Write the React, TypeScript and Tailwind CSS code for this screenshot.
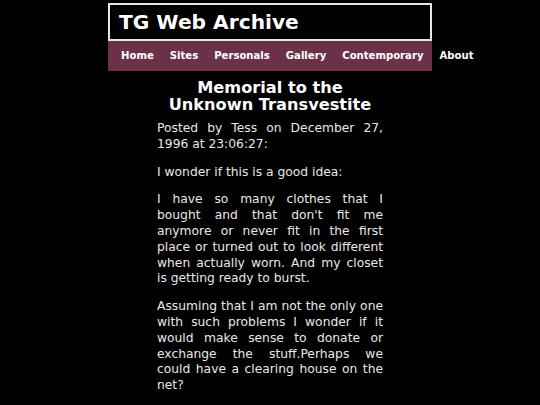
import React from "react";

export default function App() {
  const nav = ["Home", "Sites", "Personals", "Gallery", "Contemporary", "About"];
  return (
    <div className="min-h-[405px] bg-black text-[#e8e8e8]" style={{ fontFamily: '"DejaVu Sans", Verdana, sans-serif' }}>
      <div className="mx-auto w-[324px] pt-[3px]">
        <div className="border-2 border-[#e6e6e6] bg-black h-[38px] flex items-center pl-[9px]">
          <h1 className="text-[20.2px] font-bold text-white leading-none">TG Web Archive</h1>
        </div>
        <nav className="bg-[#6b3149] h-[30px] flex items-center pl-[5px] whitespace-nowrap">
          {nav.map((n) => (
            <a key={n} className="px-[8px] text-[10.1px] font-bold text-white">
              {n}
            </a>
          ))}
        </nav>
      </div>
      <div className="mx-auto w-[226px] pt-[8px]">
        <h2 className="text-center text-[16.2px] font-bold text-white leading-[17px]">
          Memorial to the
          <br />
          Unknown Transvestite
        </h2>
        <div className="text-[12.3px] leading-[15.8px] text-justify mt-[8px]">
          <p className="mb-[12px]">Posted by Tess on December 27, 1996 at 23:06:27:</p>
          <p className="mb-[12px]">I wonder if this is a good idea:</p>
          <p className="mb-[12px]">
            I have so many clothes that I bought and that don't fit me anymore or never fit in the first place or turned out to look different when actually worn. And my closet is getting ready to burst.
          </p>
          <p className="mb-[12px]">
            Assuming that I am not the only one with such problems I wonder if it would make sense to donate or exchange the stuff.Perhaps we could have a clearing house on the net?
          </p>
          <p className="mb-[12px]">
            Or perhaps we can have some sort of exchange where we could swap the things we no longer need with others who could use them.
          </p>
        </div>
      </div>
    </div>
  );
}
